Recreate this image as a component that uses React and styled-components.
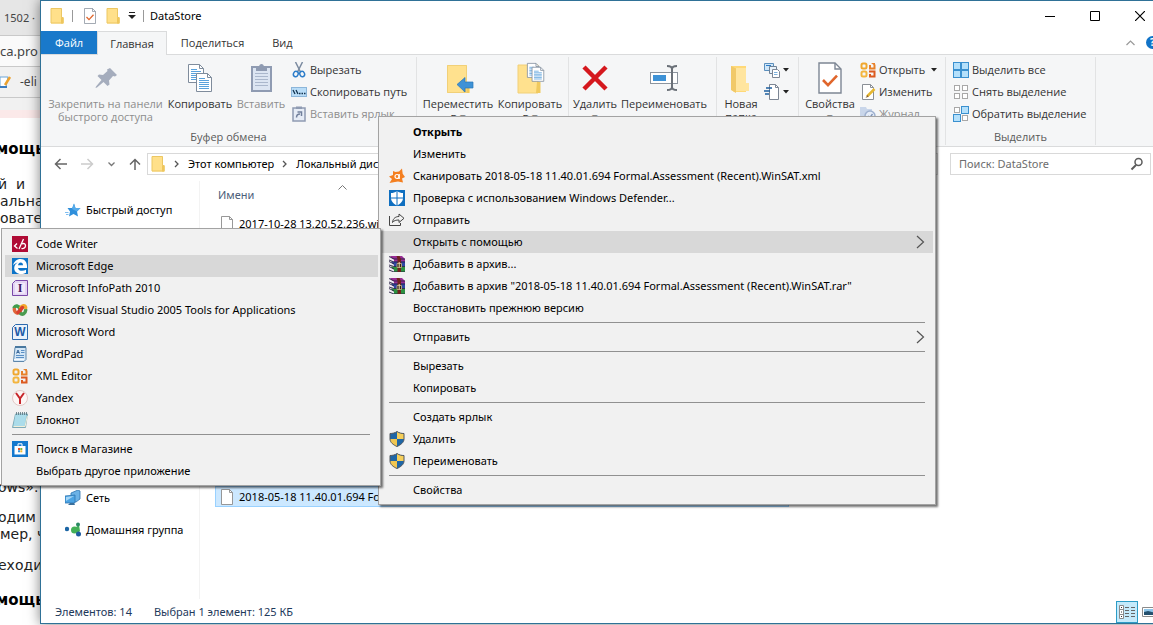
import React from 'react';
import styled, { createGlobalStyle, css } from 'styled-components';

const GlobalStyle = createGlobalStyle`
  * {
    box-sizing: border-box;
  }

  body {
    margin: 0;
    background: #fff;
    color: #000;
    font-family: 'Noto Sans', 'Open Sans', sans-serif;
    font-size: 11px;
    line-height: 16px;
  }

  button {
    margin: 0;
    padding: 0;
    border: 0;
    background: none;
    color: inherit;
    font: inherit;
    white-space: nowrap;
  }

  svg {
    display: block;
    flex: none;
  }
`;

/* ---------- icons ---------- */

const Svg = ({ w = 16, h = w, box, children }) => (
  <svg
    width={w}
    height={h}
    viewBox={box || `0 0 ${w} ${h}`}
    fill="none"
    aria-hidden="true"
  >
    {children}
  </svg>
);

const FolderIcon = () => (
  <Svg>
    <path d="M2 .5h11v9h1.500v6H2z" fill="#ffe08a" />
    <path d="M12 9.500h2.500v6H12z" fill="#efc65a" />
    <path d="M2 .5h10.500v9h1.500v5.500H2z" stroke="#ecc763" />
  </Svg>
);

const SheetIcon = ({ size = 16 }) => (
  <Svg w={size} box="0 0 16 16">
    <path d="M2.500.5h8l3 3v12h-11z" fill="#fff" stroke="#7d8694" strokeWidth=".7" />
    <path d="M10.500.5v3h3" stroke="#7d8694" strokeWidth=".7" />
    <path d="M4.500 9l2.500 2.600 4.500-4.800" stroke="#e0662c" strokeWidth="1.300" />
  </Svg>
);

const PinIcon = () => (
  <Svg w={32}>
    <path
      d="M20 6l7 7-2 1.500-2-.5-4 4.500.5 4-2 1.500-4-4-6.500 5.500-1.500.5.5-1.500L11.500 18l-4-4L9 12.500l4 .5 4.500-4-.5-1.500z"
      fill="#a5adbd"
    />
  </Svg>
);

const Page = ({ x, y }) => (
  <g transform={`translate(${x} ${y})`}>
    <path d="M.5.500h11l4 4v14H.5z" fill="#fff" stroke="#7f8c9c" />
    <path d="M11.500.5v4h4" stroke="#7f8c9c" />
    <path d="M3 5.500h6M3 7.500h10M3 9.500h10M3 11.500h10M3 13.500h10M3 15.500h10" stroke="#5aa2dc" />
  </g>
);

const CopyIcon = () => (
  <Svg w={32}>
    <Page x={4} y={2} />
    <Page x={12} y={11} />
  </Svg>
);

const ClipboardIcon = () => (
  <Svg w={32}>
    <rect x="7" y="5" width="19" height="24" fill="#dce5f2" stroke="#8f9bb2" strokeWidth="2" />
    <path d="M10 11.500h13M10 14.500h13M10 17.500h13M10 20.500h13M10 23.500h13" stroke="#aab7cc" />
    <path d="M11 5h3c0-4 5-4 5 0h3v4H11z" fill="#8f9bb2" />
  </Svg>
);

const ScissorsIcon = () => (
  <Svg>
    <path d="M4.500 0l5 10M11.500 0l-5 10" stroke="#7b8ba0" strokeWidth="1.500" />
    <ellipse cx="4.800" cy="12" rx="2.300" ry="2.700" transform="rotate(25 4.800 12)" stroke="#2b7cc9" strokeWidth="1.500" />
    <ellipse cx="11.200" cy="12" rx="2.300" ry="2.700" transform="rotate(-25 11.200 12)" stroke="#2b7cc9" strokeWidth="1.500" />
  </Svg>
);

const PathIcon = () => (
  <Svg>
    <rect x=".5" y="3.500" width="15" height="9" fill="#b9ddf8" stroke="#8cb6da" />
    <path d="M2 6l2 4M5 6l2 4" stroke="#12334f" strokeWidth="1.300" />
    <path d="M8 9.500h1.500M10.500 9.500H12M13 9.500h1.500" stroke="#12334f" strokeWidth="1.300" />
  </Svg>
);

const PasteLinkIcon = () => (
  <Svg>
    <rect x="2" y="2" width="12" height="13" fill="#e6ecf6" stroke="#8f9bb2" strokeWidth="1.500" />
    <path d="M5 .5h6v2.500H5z" fill="#8f9bb2" />
    <path d="M5.500 11.500c0-3 1.500-3.500 3.500-3.500M6.500 6h4v4" stroke="#72809c" strokeWidth="1.500" />
  </Svg>
);

const MoveToIcon = () => (
  <Svg w={32}>
    <path d="M5 3h20v17h3v11H5z" fill="#ffe18e" />
    <path d="M24 20h3v11h-6z" fill="#f0c95e" />
    <path d="M5.500 3.500h19v27h-19z" stroke="#f1d078" />
    <path d="M15 22.500l8-7v4.500h8v6h-8v4z" fill="#3e92d6" stroke="#2a77b8" strokeWidth=".7" />
  </Svg>
);

const CopyToIcon = () => (
  <Svg w={32}>
    <path d="M4 3h20v28H4z" fill="#ffe18e" stroke="#f1d078" />
    <path d="M23 20h3.500v11H22z" fill="#f0c95e" />
    <g transform="translate(13 1) scale(.78)">
      <Page x={0} y={0} />
      <Page x={6} y={5} />
    </g>
  </Svg>
);

const DeleteIcon = () => (
  <Svg w={32}>
    <path d="M5 5l22 22M27 5L5 27" stroke="#d5181e" strokeWidth="4.500" />
  </Svg>
);

const RenameIcon = () => (
  <Svg w={32}>
    <rect x="2.500" y="10.500" width="27" height="11" fill="#fff" stroke="#8c949e" />
    <path d="M5 13h13v6H5z" fill="#3e92d6" />
    <path d="M19 4c3 0 5 .5 5 3 0-2.500 2-3 5-3M24 6v20M19 28c3 0 5-.5 5-3 0 2.500 2 3 5 3" stroke="#6a7078" strokeWidth="2" />
  </Svg>
);

const NewFolderIcon = () => (
  <Svg w={32}>
    <path d="M6 4h15v26H9l-3-3z" fill="#ffd978" />
    <path d="M11 6h10v15h3v8H11z" fill="#ffe59f" />
    <path d="M6 4l5 2.500V31l-5-3z" fill="#f1c968" />
  </Svg>
);

const NewItemIcon = () => (
  <Svg>
    <path d="M.5 1.500h9v7h-9z" fill="#cfe6f8" stroke="#5b8fbd" />
    <path d="M2 3.500h5M5 5.500h6" stroke="#2b7cc9" />
    <path d="M5.500 4.500h7v7h-7z" fill="#e7f2fb" stroke="#6f8296" />
    <path d="M8.500 7.500h5l2 2v6h-7z" fill="#fff" stroke="#7d8694" />
    <path d="M10 10.500h3.500M10 12.500h3.500" stroke="#7db1dd" />
  </Svg>
);

const EasyAccessIcon = () => (
  <Svg>
    <path d="M5.500.5h6l3 3v12h-9z" fill="#fff" stroke="#7d8694" />
    <path d="M11.500.5v3h3" stroke="#7d8694" />
    <path d="M2 4h6M0 7h6M1 10h4" stroke="#1d5f9e" strokeWidth="1.500" />
  </Svg>
);

const OfficeIcon = () => (
  <Svg>
    <g strokeWidth="2">
      <rect x="1.500" y="1.500" width="5" height="5" rx="1.500" stroke="#f0a72e" />
      <path d="M10 3v3.500h4.500V2.500" stroke="#e8812a" />
      <rect x="1.500" y="9.500" width="5" height="5" rx="1.500" stroke="#f3b53f" />
      <path d="M9 9.500h5.500v5H10V12" stroke="#dc5b21" />
    </g>
    <path d="M11 1h4v3z" fill="#e8812a" />
  </Svg>
);

const EditIcon = () => (
  <Svg>
    <path d="M2.500.5h8l3 3v12h-11z" fill="#fff" stroke="#8a8f96" />
    <path d="M10.500.5v3h3" stroke="#8a8f96" />
    <path d="M14.500 5L7 12.500" stroke="#e6b730" strokeWidth="2.500" />
    <path d="M7.500 11l-2 3 3-1.500z" fill="#7c5a3a" />
  </Svg>
);

const HistoryIcon = () => (
  <Svg>
    <path d="M0 1h6l1 2h5v11H0z" fill="#c9d6ea" />
    <circle cx="10" cy="10" r="5" fill="#e6edf8" stroke="#9fb1cf" strokeWidth="1.500" />
    <path d="M8 10l2 1.500 2.500-3.500" stroke="#8095b8" strokeWidth="1.300" />
  </Svg>
);

const Cells = ({ on }) => (
  <Svg>
    {[[1, 1], [9, 1], [1, 9], [9, 9]].map(([x, y], i) => (
      <rect
        key={`${x}-${y}`}
        x={x + 0.5 - (on[i] ? 1 : 0)}
        y={y + 0.5 - (on[i] ? 1 : 0)}
        width={on[i] ? 7 : 5}
        height={on[i] ? 7 : 5}
        fill={on[i] ? '#b4e0fb' : '#fff'}
        stroke={on[i] ? '#3a90cf' : '#a8a8a8'}
      />
    ))}
  </Svg>
);

const AvastIcon = () => (
  <Svg>
    <path
      d="M4 3l2.500 1L10 3.500 13 .5l.7 5.200L16 9l-3 1.500L14 14.500l-5-1-3 .5L.5 15 3 11 0 8.500l4-1.500z"
      fill="#f47f20"
    />
    <circle cx="8" cy="8.500" r="2" stroke="#fff" strokeWidth="1.200" />
    <path d="M10.200 6v5" stroke="#fff" strokeWidth="1.200" />
  </Svg>
);

const DefenderIcon = () => (
  <Svg>
    <path d="M0 0h16v16H0z" fill="#0f6fc0" />
    <path d="M8 1c2 1.500 4 2 6 2v5c0 3.500-3 6-6 7.500C5 14 2 11.500 2 8V3c2 0 4-.5 6-2z" fill="#fff" />
    <path d="M8 1v15M2 8h12" stroke="#0f6fc0" />
  </Svg>
);

const ShareIcon = () => (
  <Svg>
    <path d="M.5 4v9.500h11V11" stroke="#444" />
    <path d="M3.500 10.500C4 6 7 4.500 10 4.500V2l5 4.300-5 4.200V8C7 8 5 8.500 3.500 10.500z" stroke="#444" strokeLinejoin="round" />
  </Svg>
);

const WinrarIcon = () => (
  <Svg>
    <path d="M1 0h12l3 3v3H5z" fill="#9a2d96" />
    <path d="M2 5.500h14v4.500H5z" fill="#2f47a5" />
    <path d="M2 10.500h14v5.500H5z" fill="#2c9140" />
    <path d="M0 1l5 2.500v2.200L0 3.500zM0 6l5 2.500v2L0 8.500zM0 11l5 2.500V16l-5-2.500z" fill="#efe9f2" />
    <path d="M0 .5L5 3h11M0 5.500L5 8M0 4l5 2h11M0 10.500L5 13M0 9l5 1.500h11M0 14l5 2h11" stroke="#282244" strokeWidth=".9" />
    <path d="M7.500 0h3l1.500 3v13H8.500V3z" fill="#70221f" />
    <path d="M8 7.500h4.500v4H8z" fill="#2c2118" stroke="#cdb884" strokeWidth=".8" />
    <path d="M10.200 6v5.500" stroke="#f2e3b0" />
  </Svg>
);

const ShieldIcon = () => (
  <Svg>
    <path d="M8 .5C10 2 12.500 2.500 15 2.500V8c0 3.500-3.500 6-7 7.500V8z" fill="#1f66a6" />
    <path d="M8 .5C10 2 12.500 2.500 15 2.500V8H8z" fill="#f6cf5a" />
    <path d="M8 .5C6 2 3.500 2.500 1 2.500V8h7z" fill="#1f66a6" />
    <path d="M1 8c0 3.500 3.500 6 7 7.500V8z" fill="#f0c651" />
    <path d="M8 .5C10 2 12.500 2.500 15 2.500V8c0 3.500-3.500 6-7 7.500C4.500 14 1 11.500 1 8V2.500C3.500 2.500 6 2 8 .5z" stroke="#51565c" />
  </Svg>
);

const CodeWriterIcon = () => (
  <Svg>
    <path d="M0 0h16v16H0z" fill="#b00b35" />
    <path d="M5 7.500L2.500 10l3 2.500M11.500 3L7 13" stroke="#fff" strokeWidth="1.300" />
    <path d="M10 8c1.500-1 3.500-.5 3.500 1.800S11 13 9.500 12.300" stroke="#fff" strokeWidth="1.300" />
  </Svg>
);

const EdgeIcon = () => (
  <Svg>
    <path d="M0 0h16v16H0z" fill="#0d74c8" />
    <path d="M1 7.500C2 3.500 4.800 1 8.500 1c4.500 0 6.500 3.500 6.500 7v2H6c.3 2 2 2.800 4 2.800 1.500 0 2.800-.4 4-1v3c-1.500.8-3 1.200-5 1.200-4 0-6.800-2.500-6.800-6 0-2.500 1.500-4.500 3.500-5.500C3.500 5 2 6 1 7.500z" fill="#fff" />
    <path d="M6 7.300c.3-1.700 1.200-2.800 2.700-2.800s2.300 1.200 2.300 2.800z" fill="#0d74c8" />
  </Svg>
);

const Letter = styled.text`
  font-family: ${({ $serif }) => ($serif ? "'Liberation Serif', serif" : "'Liberation Sans', sans-serif")};
  font-size: 12px;
  font-weight: 700;
  text-anchor: middle;
`;

const InfoPathIcon = () => (
  <Svg>
    <path d="M.5 3.500l3-3h12v15H.5z" fill="#e3d3f3" stroke="#7a48a8" />
    <path d="M3 3h10v10.500H3z" fill="#f2e9fa" />
    <Letter x="8" y="12" fill="#3f1764" $serif>I</Letter>
  </Svg>
);

const WordIcon = () => (
  <Svg>
    <path d="M.5 3.500l3-3h12v15H.5z" fill="#eaf2fb" stroke="#2c69ad" />
    <Letter x="8" y="12" fill="#1d5ba8">W</Letter>
  </Svg>
);

const VisualStudioIcon = () => (
  <Svg>
    <g strokeWidth="3.500" strokeLinecap="round">
      <path d="M8 7C6.500 3.500 3.500 3 2.300 5.500" stroke="#3f9d4d" />
      <path d="M2.300 7.500C3 11 6 12.500 8.500 9" stroke="#e0653a" />
      <path d="M8 11c2.500 2.500 5.500.5 5.700-3" stroke="#4a9a4f" />
      <path d="M8.500 6c1.500-3 4.500-3 5.200-.5" stroke="#f2a72c" />
      <path d="M6 10.500L10.500 5.500" stroke="#d8402f" />
    </g>
  </Svg>
);

const WordPadIcon = () => (
  <Svg>
    <path d="M3 1.500h11v12l-2 2H1.500z" fill="#d3e6f6" stroke="#5d86ab" />
    <path d="M3 1h11" stroke="#49789f" strokeWidth="2" />
    <path d="M4.500 7.500L6 4l1.500 3.500M5 6.500h2" stroke="#2e5d93" strokeWidth=".9" />
    <path d="M9 4.500h3.500M9 6.500h3.500M4 9.500h8M4 11.500h8" stroke="#5b8fc4" />
    <path d="M2 13.500h10" stroke="#f4f9fd" />
  </Svg>
);

const YandexIcon = () => (
  <Svg>
    <circle cx="8" cy="8" r="7.500" fill="#fdf6f5" stroke="#e2c9c6" />
    <path d="M4 3l4 5.500L12 3M8 8.500V14" stroke="#c7262b" strokeWidth="2" />
  </Svg>
);

const NotepadIcon = () => (
  <Svg>
    <path d="M3.500 2h12l-2 13.500H.5z" fill="#8cc8da" stroke="#6e9dab" strokeWidth=".8" />
    <path d="M3.500 2.500h11L12.500 14H1.500z" fill="#abdcea" />
    <path d="M1.500 14.500h11.500L15.300 4" stroke="#f1eed8" />
    <path d="M4.500 0v3M6.500 0v3M8.500 0v3M10.500 0v3M12.500 0v3M14.500 0v3" stroke="#57727c" strokeWidth=".8" />
  </Svg>
);

const StoreIcon = () => (
  <Svg>
    <path d="M0 0h16v16H0z" fill="#1479ce" />
    <path d="M2.500 5h11v8.500h-11z" fill="#fff" />
    <path d="M6 5V2.800h4V5" stroke="#fff" />
    <path d="M6 7h2v2H6z" fill="#e5562b" />
    <path d="M8.300 7h2v2h-2z" fill="#7db33a" />
    <path d="M6 9.300h2v2H6z" fill="#2f92dc" />
    <path d="M8.300 9.300h2v2h-2z" fill="#f2b92b" />
  </Svg>
);

const StarIcon = () => (
  <Svg>
    <path d="M9 1.500l1.500 4.500h5l-3.500 3.500 1 5-4.500-2.500L4 14.500l1-5L2.500 6h4.700z" fill="#2f8fdb" />
    <path d="M9 1.500l1.500 4.500h5L12 9.500 7 7z" fill="#56abea" />
    <path d="M0 10.500h3.500M1 12.500h2.500" stroke="#7fbdf0" />
  </Svg>
);

const NetworkIcon = () => (
  <Svg>
    <path d="M6 3l7-3 2 1v8l-4 3-5-2z" fill="#6cb2e6" stroke="#2e75b0" strokeWidth=".8" />
    <path d="M0 6l10-1v8H0z" fill="#4ba3e3" stroke="#2e75b0" strokeWidth=".8" />
    <path d="M1 7l8-1-8 5z" fill="#a5d6f7" />
    <path d="M3 15h7l-1-2H5z" fill="#3a6f9c" />
  </Svg>
);

const HomegroupIcon = () => (
  <Svg>
    <path d="M7 8l7-5 1 6-3 3z" fill="#43b057" />
    <circle cx="9.500" cy="8" r="3.500" fill="#43b057" />
    <circle cx="2" cy="7" r="2.200" fill="#1c66a5" />
    <circle cx="13" cy="2.500" r="2" fill="#2a8a63" />
    <circle cx="13.500" cy="12" r="2.500" fill="#1d5b9f" />
  </Svg>
);

const FileIcon = () => (
  <Svg>
    <path d="M1.500.5h8l3 3v12h-11z" fill="#fff" stroke="#8c8c8c" strokeWidth=".9" />
    <path d="M9.500.5v3h3" stroke="#8c8c8c" strokeWidth=".9" />
  </Svg>
);

const SearchIcon = () => (
  <Svg w={14}>
    <circle cx="8.500" cy="5" r="3.500" stroke="#5c5c5c" strokeWidth="1.500" />
    <path d="M6 8l-4.500 4.500" stroke="#5c5c5c" strokeWidth="2" />
  </Svg>
);

const DetailsIcon = () => (
  <Svg>
    <path d="M.5 1.500h4v13h-4zM.5 5.500h4M.5 10.500h4" fill="#fff" stroke="#8b8b8b" />
    <path d="M2 3.500h1M2 8h1M2 12.500h1" stroke="#333" />
    <path d="M6 3.500h4M12 3.500h4M6 6.500h4M12 6.500h4M6 9.500h4M12 9.500h4M6 12.500h4M12 12.500h4" stroke="#666" />
  </Svg>
);

const ThumbsIcon = () => (
  <Svg>
    <path d="M.5 3.500h15v9H.5z" fill="#fff" stroke="#8b8b8b" />
    <path d="M2 5h12v6H2z" fill="#8ec6ea" />
    <path d="M2 8l4-1 8 2v2H2z" fill="#24506e" />
  </Svg>
);

const ChevronRight = () => (
  <Svg w={9} h={14}>
    <path d="M1 1l6.500 6L1 13" stroke="#555" strokeWidth="1.200" />
  </Svg>
);

const CrumbArrow = () => (
  <Svg w={6} h={8}>
    <path d="M1 1l3 3-3 3" stroke="#555" strokeWidth="1.300" />
  </Svg>
);

const Caret = () => (
  <Svg w={6} h={4}>
    <path d="M0 0h6L3 3.500z" fill="#222" />
  </Svg>
);

/* ---------- page behind the window ---------- */

const Desktop = styled.div`
  position: relative;
  display: flex;
  min-height: 100vh;
  overflow: hidden;
  background: #fff;
`;

const BrowserStrip = styled.div`
  width: 40px;
  flex: none;
  overflow: hidden;
  white-space: nowrap;
`;

const BrowserBar = styled.div`
  display: flex;
  align-items: center;
  gap: 8px;
  height: ${({ $height }) => $height}px;
  padding-left: ${({ $left }) => $left || 0}px;
  background: ${({ $bg }) => $bg};
  border-bottom: 1px solid #c9c9c9;
  color: #444;
  font-size: ${({ $size }) => $size || 11}px;
`;

const PageTop = styled.div`
  height: 20px;
  background: linear-gradient(#f1f1f1 60%, #fbe9e9 60%);
`;

const Article = styled.div`
  padding-top: 21px;
  color: #222;
  font-family: 'DejaVu Sans', sans-serif;
  font-size: 14px;
  line-height: 17px;
  text-indent: -2px;
`;

const Heading = styled.h2`
  margin: 0;
  color: #000;
  font-size: 15px;
  line-height: 20px;
  text-indent: -4px;
`;

const Paragraph = styled.p`
  margin: ${({ $gap }) => $gap || 17}px 0 0;
`;

/* ---------- explorer window ---------- */

// the right edge runs past the screen, as the window is dragged aside
const Window = styled.main`
  display: flex;
  flex: 1;
  flex-direction: column;
  min-width: 0;
  margin: 0 -10px 1px 0;
  background: #fff;
  border: 1px solid #2f7197;
  box-shadow: 0 0 12px rgba(0, 0, 0, 0.5);
`;

const TitleBar = styled.header`
  display: flex;
  align-items: center;
  height: 30px;
  padding-left: 8px;
`;

const QuickAccess = styled.div`
  display: flex;
  align-items: center;
  gap: 7px;
`;

const Bar = styled.span`
  width: 1px;
  height: 12px;
  margin-right: 2px;
  background: #999;
`;

const Title = styled.h1`
  flex: 1;
  margin: 0 0 0 4px;
  font-size: 11px;
  font-weight: 400;
`;

const WindowButton = styled.button`
  display: flex;
  align-items: center;
  justify-content: center;
  width: 45px;
  height: 30px;
`;

const Tabs = styled.nav`
  display: flex;
  height: 24px;
  border-bottom: 1px solid #dadbdc;
  font-family: 'Open Sans', 'Noto Sans', sans-serif;
`;

const Tab = styled.button`
  height: 24px;
  padding: 0 14px;
  color: #333;

  ${({ $file }) =>
    $file &&
    css`
      height: 23px;
      background: #1979ca;
      color: #fff;
    `}

  ${({ $active }) =>
    $active &&
    css`
      padding: 0 12px;
      background: #f5f6f7;
      border: 1px solid #dadbdc;
      border-bottom: 0;
    `}
`;

const TabTools = styled.div`
  display: flex;
  align-items: center;
  gap: 11px;
  margin-left: auto;
  padding-right: 3px;
`;

const Help = styled.button`
  width: 13px;
  height: 13px;
  border-radius: 50%;
  background: #1173c7;
  color: #fff;
  font-size: 10px;
  font-weight: 700;
  line-height: 13px;
`;

const Ribbon = styled.div`
  display: flex;
  height: 92px;
  background: #f5f6f7;
  border-bottom: 1px solid #dadbdc;
  color: #333;
  font-family: 'Open Sans', 'Noto Sans', sans-serif;
`;

const Group = styled.section`
  display: flex;
  flex-direction: column;
  justify-content: space-between;
  flex: none;
  width: ${({ $width }) => $width}px;
  margin: 2px 0 1px;
  padding: 0 4px 0 ${({ $left }) => $left || 4}px;
  border-right: 1px solid #e2e3e4;
`;

const GroupBody = styled.div`
  display: flex;
`;

const GroupLabel = styled.div`
  color: #5a5a5a;
  text-align: center;
`;

const Divider = styled.span`
  width: 1px;
  height: 82px;
  margin: 0 2px 0 5px;
  background: #e2e3e4;
`;

const LargeButton = styled.button`
  display: flex;
  flex-direction: column;
  align-items: center;
  flex: none;
  width: ${({ $width }) => $width}px;
  height: 66px;
  padding-top: 5px;
  color: ${({ disabled }) => (disabled ? '#8d8d8d' : 'inherit')};
  line-height: 13px;

  svg {
    margin-bottom: 3px;
  }
`;

const SmallButtons = styled.div`
  display: flex;
  flex-direction: column;
  padding: 2px 0 0 3px;
`;

const SmallButton = styled.button`
  display: flex;
  align-items: center;
  gap: 3px;
  height: 22px;
  color: ${({ disabled }) => (disabled ? '#8d8d8d' : 'inherit')};
`;

const AddressRow = styled.div`
  display: flex;
  align-items: center;
  height: 34px;
  padding: 0 11px 0 13px;
`;

const NavButtons = styled.div`
  display: flex;
  align-items: center;
  gap: 14px;
  width: 93px;
`;

const Address = styled.div`
  display: flex;
  align-items: center;
  flex: 1;
  gap: 8px;
  height: 22px;
  margin-right: 12px;
  padding: 0 2px;
  border: 1px solid #d9d9d9;
`;

const Search = styled.label`
  display: flex;
  align-items: center;
  width: 201px;
  height: 22px;
  padding: 0 6px 0 8px;
  border: 1px solid #d9d9d9;
`;

const SearchInput = styled.input`
  flex: 1;
  min-width: 0;
  padding: 0;
  border: 0;
  outline: 0;
  background: none;
  font: inherit;

  &::placeholder {
    color: #6d6d6d;
    opacity: 1;
  }
`;

const Body = styled.div`
  display: flex;
  flex: 1;
`;

const Places = styled.nav`
  display: grid;
  grid-template-rows: repeat(11, 32px);
  align-content: start;
  width: 159px;
  padding: 13px 0 0 24px;
  border-right: 1px solid #f3f3f3;
`;

const Place = styled.a`
  display: flex;
  align-items: center;
  gap: 5px;
  grid-row: ${({ $row }) => $row};
  color: #000;
  text-decoration: none;
  white-space: nowrap;
`;

const Files = styled.div`
  flex: 1;
  padding-left: 15px;
`;

const ColumnHeader = styled.button`
  display: flex;
  align-items: center;
  gap: 84px;
  height: 24px;
  margin-bottom: 8px;
  padding: 4px 3px 0;
  color: #4c607a;

  svg {
    align-self: flex-start;
  }
`;

const FileList = styled.ul`
  display: grid;
  grid-template-rows: repeat(14, 21px);
  width: 574px;
  margin: 0;
  padding: 0;
  list-style: none;
`;

const FileRow = styled.li`
  display: flex;
  align-items: center;
  gap: 3px;
  grid-row: ${({ $row }) => $row};
  padding-left: 4px;
  border: 1px solid ${({ $selected }) => ($selected ? '#99d1ff' : 'transparent')};
  background: ${({ $selected }) => ($selected ? '#cce8ff' : 'none')};
  white-space: nowrap;
`;

const StatusBar = styled.footer`
  display: flex;
  align-items: center;
  gap: 22px;
  height: 24px;
  padding: 2px 1px 0 14px;
  color: #1e395b;
`;

const Views = styled.div`
  display: flex;
  align-items: center;
  gap: 1px;
  margin-left: auto;
`;

const ViewButton = styled.button`
  display: flex;
  align-items: center;
  justify-content: center;
  width: 22px;
  height: 22px;
  background: ${({ $active }) => ($active ? '#c4eafb' : 'none')};
  border: ${({ $active }) => ($active ? '1px solid #2c9cc6' : 0)};
`;

/* ---------- context menus ---------- */

const MenuPanel = styled.div`
  position: absolute;
  top: ${({ $top }) => $top}px;
  left: ${({ $left }) => $left}px;
  width: ${({ $width }) => $width}px;
  padding: 4px 2px 3px 3px;
  background: #f1f1f1;
  border: 1px solid #a3a3a3;
  box-shadow: 2px 2px 2px rgba(0, 0, 0, 0.55);
`;

const MenuItem = styled.button`
  display: flex;
  align-items: center;
  width: 100%;
  height: 22px;
  padding: 0 8px 0 7px;
  background: ${({ $hover }) => ($hover ? '#d8d8d8' : 'none')};
  font-weight: ${({ $bold }) => ($bold ? 700 : 400)};
`;

const MenuIcon = styled.span`
  width: 16px;
  margin-right: 8px;
`;

const MenuText = styled.span`
  flex: 1;
  text-align: left;
`;

const MenuLine = styled.hr`
  height: 1px;
  margin: 3px 8px 3px 7px;
  border: 0;
  background: #919191;
`;

const Menu = ({ items, label, ...place }) => (
  <MenuPanel role="menu" aria-label={label} {...place}>
    {items.map((item, i) =>
      item ? (
        <MenuItem
          key={i}
          type="button"
          role="menuitem"
          $bold={item.bold}
          $hover={item.hover}
        >
          <MenuIcon>{item.icon}</MenuIcon>
          <MenuText>{item.text}</MenuText>
          {item.more && <ChevronRight />}
        </MenuItem>
      ) : (
        <MenuLine key={i} />
      )
    )}
  </MenuPanel>
);

const fileMenu = [
  { text: 'Открыть', bold: true },
  { text: 'Изменить' },
  {
    text: 'Сканировать 2018-05-18 11.40.01.694 Formal.Assessment (Recent).WinSAT.xml',
    icon: <AvastIcon />,
  },
  { text: 'Проверка с использованием Windows Defender...', icon: <DefenderIcon /> },
  { text: 'Отправить', icon: <ShareIcon /> },
  { text: 'Открыть с помощью', hover: true, more: true },
  { text: 'Добавить в архив...', icon: <WinrarIcon /> },
  {
    text: 'Добавить в архив "2018-05-18 11.40.01.694 Formal.Assessment (Recent).WinSAT.rar"',
    icon: <WinrarIcon />,
  },
  { text: 'Восстановить прежнюю версию' },
  null,
  { text: 'Отправить', more: true },
  null,
  { text: 'Вырезать' },
  { text: 'Копировать' },
  null,
  { text: 'Создать ярлык' },
  { text: 'Удалить', icon: <ShieldIcon /> },
  { text: 'Переименовать', icon: <ShieldIcon /> },
  null,
  { text: 'Свойства' },
];

const openWithMenu = [
  { text: 'Code Writer', icon: <CodeWriterIcon /> },
  { text: 'Microsoft Edge', icon: <EdgeIcon />, hover: true },
  { text: 'Microsoft InfoPath 2010', icon: <InfoPathIcon /> },
  {
    text: 'Microsoft Visual Studio 2005 Tools for Applications',
    icon: <VisualStudioIcon />,
  },
  { text: 'Microsoft Word', icon: <WordIcon /> },
  { text: 'WordPad', icon: <WordPadIcon /> },
  { text: 'XML Editor', icon: <OfficeIcon /> },
  { text: 'Yandex', icon: <YandexIcon /> },
  { text: 'Блокнот', icon: <NotepadIcon /> },
  null,
  { text: 'Поиск в Магазине', icon: <StoreIcon /> },
  { text: 'Выбрать другое приложение' },
];

const Browser = () => (
  <BrowserStrip>
    <BrowserBar $height={36} $bg="#e6e6e6" $left={4}>1502 ·</BrowserBar>
    <BrowserBar $height={31} $bg="#fafafa" $size={13}>ca.pro</BrowserBar>
    <BrowserBar $height={31} $bg="#f1f1f1" $size={12}>
      <Svg w={12} h={16}>
        <path d="M0 3h8l-2 10H0z" fill="#fff" stroke="#6aa5d8" />
        <path d="M0 13h7" stroke="#3b7cc0" strokeWidth="2" />
        <path d="M10 3L5 11" stroke="#eda22e" strokeWidth="2.500" />
      </Svg>
      -eli
    </BrowserBar>
    <PageTop />
    <Article>
      <Heading>мощь</Heading>
      <Paragraph>
        й&nbsp; и
        <br />
        альна
        <br />
        овател
      </Paragraph>
      <Paragraph $gap={252}>ows».</Paragraph>
      <Paragraph $gap={13}>
        одим
        <br />
        мер, ч
      </Paragraph>
      <Paragraph $gap={14}>еходи</Paragraph>
      <Paragraph as={Heading} $gap={16}>мощь</Paragraph>
    </Article>
  </BrowserStrip>
);

const ExplorerRibbon = () => (
  <Ribbon>
    <Group $width={376}>
      <GroupBody>
        <LargeButton $width={121} disabled>
          <PinIcon />
          <span>Закрепить на панели</span>
          <span>быстрого доступа</span>
        </LargeButton>
        <LargeButton $width={68}>
          <CopyIcon />
          <span>Копировать</span>
        </LargeButton>
        <LargeButton $width={54} disabled>
          <ClipboardIcon />
          <span>Вставить</span>
        </LargeButton>
        <SmallButtons>
          <SmallButton><ScissorsIcon />Вырезать</SmallButton>
          <SmallButton><PathIcon />Скопировать путь</SmallButton>
          <SmallButton disabled><PasteLinkIcon />Вставить ярлык</SmallButton>
        </SmallButtons>
      </GroupBody>
      <GroupLabel>Буфер обмена</GroupLabel>
    </Group>
    <Group $width={300} $left={2}>
      <GroupBody>
        <LargeButton $width={78}>
          <MoveToIcon />
          <span>Переместить</span>
          <span>в ▾</span>
        </LargeButton>
        <LargeButton $width={66}>
          <CopyToIcon />
          <span>Копировать</span>
          <span>в ▾</span>
        </LargeButton>
        <Divider />
        <LargeButton $width={48}>
          <DeleteIcon />
          <span>Удалить</span>
          <span>▾</span>
        </LargeButton>
        <LargeButton $width={90}>
          <RenameIcon />
          <span>Переименовать</span>
        </LargeButton>
      </GroupBody>
    </Group>
    <Group $width={82} $left={4}>
      <GroupBody>
        <LargeButton $width={40}>
          <NewFolderIcon />
          <span>Новая</span>
          <span>папка</span>
        </LargeButton>
        <SmallButtons>
          <SmallButton aria-label="Создать элемент"><NewItemIcon /><Caret /></SmallButton>
          <SmallButton aria-label="Простой доступ"><EasyAccessIcon /><Caret /></SmallButton>
        </SmallButtons>
      </GroupBody>
    </Group>
    <Group $width={147} $left={4}>
      <GroupBody>
        <LargeButton $width={54}>
          <SheetIcon size={32} />
          <span>Свойства</span>
          <span>▾</span>
        </LargeButton>
        <SmallButtons>
          <SmallButton><OfficeIcon />Открыть&nbsp;<Caret /></SmallButton>
          <SmallButton><EditIcon />Изменить</SmallButton>
          <SmallButton disabled><HistoryIcon />Журнал</SmallButton>
        </SmallButtons>
      </GroupBody>
    </Group>
    <Group $width={150} $left={4}>
      <GroupBody>
        <SmallButtons>
          <SmallButton><Cells on={[1, 1, 1, 1]} />Выделить все</SmallButton>
          <SmallButton><Cells on={[0, 0, 0, 0]} />Снять выделение</SmallButton>
          <SmallButton><Cells on={[0, 1, 1, 0]} />Обратить выделение</SmallButton>
        </SmallButtons>
      </GroupBody>
      <GroupLabel>Выделить</GroupLabel>
    </Group>
  </Ribbon>
);

const Explorer = () => (
  <Window>
    <TitleBar>
      <QuickAccess>
        <FolderIcon />
        <Bar />
        <SheetIcon />
        <FolderIcon />
        <Svg w={8} h={8}>
          <path d="M1 .5h6" stroke="#222" />
          <path d="M0 3h8L4 7z" fill="#222" />
        </Svg>
        <Bar />
      </QuickAccess>
      <Title>DataStore</Title>
      <WindowButton aria-label="Свернуть">
        <Svg w={10}><path d="M0 5.500h10" stroke="#000" /></Svg>
      </WindowButton>
      <WindowButton aria-label="Развернуть">
        <Svg w={10}><path d="M.5.500h9v9h-9z" stroke="#000" /></Svg>
      </WindowButton>
      <WindowButton aria-label="Закрыть">
        <Svg w={10}><path d="M0 0l10 10M10 0L0 10" stroke="#000" strokeWidth="1.200" /></Svg>
      </WindowButton>
    </TitleBar>
    <Tabs>
      <Tab $file>Файл</Tab>
      <Tab $active>Главная</Tab>
      <Tab>Поделиться</Tab>
      <Tab>Вид</Tab>
      <TabTools>
        <Svg w={9} h={6}><path d="M.5 5l4-4 4 4" stroke="#999" strokeWidth="1.200" /></Svg>
        <Help>?</Help>
      </TabTools>
    </Tabs>
    <ExplorerRibbon />
    <AddressRow>
      <NavButtons>
        <Svg w={13} h={12}><path d="M13 6H1.500M6.500 1l-5 5 5 5" stroke="#666" strokeWidth="1.500" /></Svg>
        <Svg w={13} h={12}><path d="M0 6h11.500M6.500 1l5 5-5 5" stroke="#ccc" strokeWidth="1.500" /></Svg>
        <Svg w={7} h={5}><path d="M.5.500l3 3 3-3" stroke="#777" strokeWidth="1.300" /></Svg>
        <Svg w={12} h={12}><path d="M6 12V1.500M1 6.500l5-5 5 5" stroke="#666" strokeWidth="1.500" /></Svg>
      </NavButtons>
      <Address>
        <FolderIcon />
        <CrumbArrow />
        <button type="button">Этот компьютер</button>
        <CrumbArrow />
        <button type="button">Локальный диск</button>
      </Address>
      <Search>
        <SearchInput aria-label="Поиск" placeholder="Поиск: DataStore" />
        <SearchIcon />
      </Search>
    </AddressRow>
    <Body>
      <Places>
        <Place href="#quick" $row={1}><StarIcon />Быстрый доступ</Place>
        <Place href="#network" $row={10}><NetworkIcon />Сеть</Place>
        <Place href="#homegroup" $row={11}><HomegroupIcon />Домашняя группа</Place>
      </Places>
      <Files>
        <ColumnHeader>
          Имени
          <Svg w={9} h={5}><path d="M.5 4.500l4-4 4 4" stroke="#777" /></Svg>
        </ColumnHeader>
        <FileList>
          <FileRow $row={1}><FileIcon />2017-10-28 13.20.52.236.winsat</FileRow>
          <FileRow $row={14} $selected>
            <FileIcon />
            2018-05-18 11.40.01.694 Formal.Assessment (Recent).WinSAT
          </FileRow>
        </FileList>
      </Files>
    </Body>
    <StatusBar>
      <span>Элементов: 14</span>
      <span>Выбран 1 элемент: 125 КБ</span>
      <Views>
        <ViewButton aria-label="Таблица" $active><DetailsIcon /></ViewButton>
        <ViewButton aria-label="Крупные значки"><ThumbsIcon /></ViewButton>
      </Views>
    </StatusBar>
  </Window>
);

const App = () => (
  <>
    <GlobalStyle />
    <Desktop>
      <Browser />
      <Explorer />
      <Menu label="Файл" items={fileMenu} $top={116} $left={378} $width={558} />
      <Menu label="Открыть с помощью" items={openWithMenu} $top={228} $left={1} $width={380} />
    </Desktop>
  </>
);

export default App;
